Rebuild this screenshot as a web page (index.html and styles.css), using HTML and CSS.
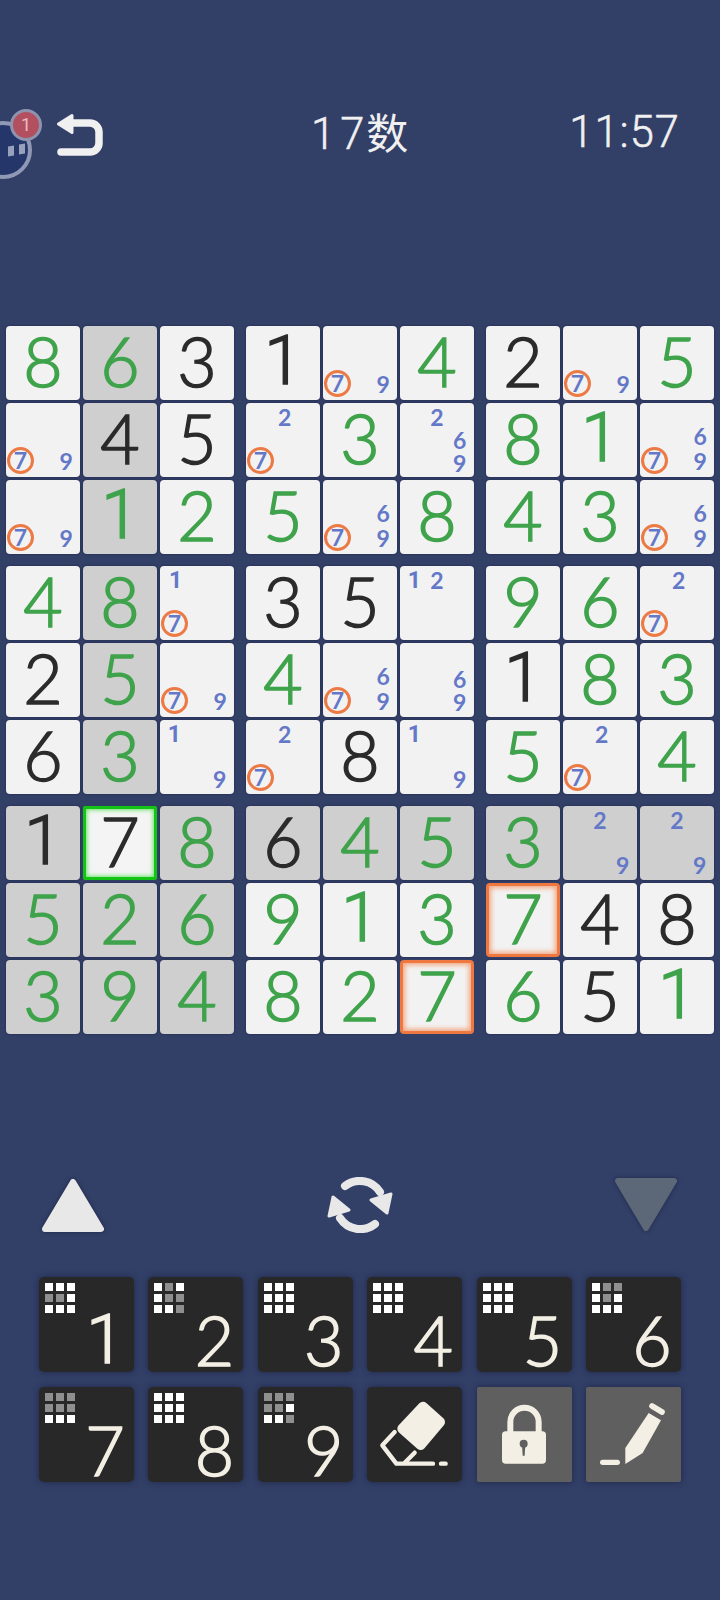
FILE: index.html
```html
<!DOCTYPE html>
<html lang="en">

<head>
    <meta charset="UTF-8">
    <meta name="viewport" content="width=device-width, initial-scale=1.0">
    <title>17数</title>
    <link rel="stylesheet" href="styles.css">
</head>

<body>
    <div class="mascot">
        <span class="eye eye-left"></span>
        <span class="eye eye-right"></span>
        <span class="badge">1</span>
    </div>

    <header class="topbar">
        <svg class="back" viewBox="0 0 46 46">
            <path class="back-line" d="M14 11H33a9 9 0 0 1 9 9v11a9 9 0 0 1-9 9H4" />
            <path class="back-head" d="M1.500 12 L15 3.500 V20.500 Z" />
        </svg>
        <div class="title">17<span class="title-han">数</span></div>
        <div class="clock">11:57</div>
    </header>

    <!-- Board: 9 boxes, each with 9 cells -->
    <main class="board">
        <div class="box">
            <div class="cell given">8</div>
            <div class="cell shade given">6</div>
            <div class="cell">3</div>
            <div class="cell notes"><i class="n7">7</i><i class="n9">9</i></div>
            <div class="cell shade">4</div>
            <div class="cell">5</div>
            <div class="cell notes"><i class="n7">7</i><i class="n9">9</i></div>
            <div class="cell shade given one">1</div>
            <div class="cell given">2</div>
        </div>
        <div class="box">
            <div class="cell one">1</div>
            <div class="cell notes"><i class="n7">7</i><i class="n9">9</i></div>
            <div class="cell given">4</div>
            <div class="cell notes"><i class="n2">2</i><i class="n7">7</i></div>
            <div class="cell given">3</div>
            <div class="cell notes"><i class="n2">2</i><i class="n6">6</i><i class="n9">9</i></div>
            <div class="cell given">5</div>
            <div class="cell notes"><i class="n6">6</i><i class="n7">7</i><i class="n9">9</i></div>
            <div class="cell given">8</div>
        </div>
        <div class="box">
            <div class="cell">2</div>
            <div class="cell notes"><i class="n7">7</i><i class="n9">9</i></div>
            <div class="cell given">5</div>
            <div class="cell given">8</div>
            <div class="cell given one">1</div>
            <div class="cell notes"><i class="n6">6</i><i class="n7">7</i><i class="n9">9</i></div>
            <div class="cell given">4</div>
            <div class="cell given">3</div>
            <div class="cell notes"><i class="n6">6</i><i class="n7">7</i><i class="n9">9</i></div>
        </div>

        <div class="box">
            <div class="cell given">4</div>
            <div class="cell shade given">8</div>
            <div class="cell notes"><i class="n1">1</i><i class="n7">7</i></div>
            <div class="cell">2</div>
            <div class="cell shade given">5</div>
            <div class="cell notes"><i class="n7">7</i><i class="n9">9</i></div>
            <div class="cell">6</div>
            <div class="cell shade given">3</div>
            <div class="cell notes"><i class="n1">1</i><i class="n9">9</i></div>
        </div>
        <div class="box">
            <div class="cell">3</div>
            <div class="cell">5</div>
            <div class="cell notes"><i class="n1">1</i><i class="n2">2</i></div>
            <div class="cell given">4</div>
            <div class="cell notes"><i class="n6">6</i><i class="n7">7</i><i class="n9">9</i></div>
            <div class="cell notes"><i class="n6">6</i><i class="n9">9</i></div>
            <div class="cell notes"><i class="n2">2</i><i class="n7">7</i></div>
            <div class="cell">8</div>
            <div class="cell notes"><i class="n1">1</i><i class="n9">9</i></div>
        </div>
        <div class="box">
            <div class="cell given">9</div>
            <div class="cell given">6</div>
            <div class="cell notes"><i class="n2">2</i><i class="n7">7</i></div>
            <div class="cell one">1</div>
            <div class="cell given">8</div>
            <div class="cell given">3</div>
            <div class="cell given">5</div>
            <div class="cell notes"><i class="n2">2</i><i class="n7">7</i></div>
            <div class="cell given">4</div>
        </div>

        <div class="box">
            <div class="cell shade one">1</div>
            <div class="cell selected">7</div>
            <div class="cell shade given">8</div>
            <div class="cell shade given">5</div>
            <div class="cell shade given">2</div>
            <div class="cell shade given">6</div>
            <div class="cell shade given">3</div>
            <div class="cell shade given">9</div>
            <div class="cell shade given">4</div>
        </div>
        <div class="box">
            <div class="cell shade">6</div>
            <div class="cell shade given">4</div>
            <div class="cell shade given">5</div>
            <div class="cell given">9</div>
            <div class="cell given one">1</div>
            <div class="cell given">3</div>
            <div class="cell given">8</div>
            <div class="cell given">2</div>
            <div class="cell given conflict">7</div>
        </div>
        <div class="box">
            <div class="cell shade given">3</div>
            <div class="cell shade notes"><i class="n2">2</i><i class="n9">9</i></div>
            <div class="cell shade notes"><i class="n2">2</i><i class="n9">9</i></div>
            <div class="cell given conflict">7</div>
            <div class="cell">4</div>
            <div class="cell">8</div>
            <div class="cell given">6</div>
            <div class="cell">5</div>
            <div class="cell given one">1</div>
        </div>
    </main>

    <div class="tools">
        <svg class="arrow" viewBox="0 0 62 54">
            <path class="arrow-up" d="M31 4 L59 51 H3 Z" />
        </svg>
        <svg class="refresh" viewBox="0 0 66 56">
            <path class="refresh-line" d="M18 9A24 24 0 0 1 53 15" />
            <path class="refresh-head" d="M64 17 L44 23 L60 36 Z" />
            <path class="refresh-line" d="M48 47A24 24 0 0 1 13 41" />
            <path class="refresh-head" d="M2 39 L22 33 L6 20 Z" />
        </svg>
        <svg class="arrow" viewBox="0 0 62 54">
            <path class="arrow-down" d="M31 50 L59 3 H3 Z" />
        </svg>
    </div>

    <!-- Number keys -->
    <section class="keypad">
        <button class="key">
            <span class="mini"><i></i><i></i><i></i><i class="used"></i><i class="used"></i><i></i><i></i><i></i><i></i></span>
            <span class="digit one">1</span>
        </button>
        <button class="key">
            <span class="mini"><i></i><i class="used"></i><i></i><i></i><i class="used"></i><i class="used"></i><i></i><i></i><i class="used"></i></span>
            <span class="digit">2</span>
        </button>
        <button class="key">
            <span class="mini"><i></i><i></i><i></i><i></i><i></i><i></i><i></i><i></i><i></i></span>
            <span class="digit">3</span>
        </button>
        <button class="key">
            <span class="mini"><i></i><i></i><i></i><i></i><i></i><i></i><i></i><i></i><i></i></span>
            <span class="digit">4</span>
        </button>
        <button class="key">
            <span class="mini"><i></i><i></i><i></i><i></i><i></i><i></i><i></i><i></i><i></i></span>
            <span class="digit">5</span>
        </button>
        <button class="key">
            <span class="mini"><i></i><i class="used"></i><i class="used"></i><i></i><i class="used"></i><i></i><i></i><i></i><i></i></span>
            <span class="digit">6</span>
        </button>
        <button class="key">
            <span class="mini"><i class="used"></i><i class="used"></i><i class="used"></i><i class="used"></i><i class="used"></i><i class="used"></i><i></i><i></i><i></i></span>
            <span class="digit">7</span>
        </button>
        <button class="key">
            <span class="mini"><i></i><i></i><i></i><i></i><i></i><i></i><i></i><i></i><i></i></span>
            <span class="digit">8</span>
        </button>
        <button class="key">
            <span class="mini"><i class="used"></i><i class="used"></i><i class="used"></i><i class="used"></i><i class="used"></i><i></i><i></i><i></i><i class="used"></i></span>
            <span class="digit">9</span>
        </button>
        <button class="key">
            <svg class="key-icon" viewBox="0 0 285 285">
                <path class="eraser-body" d="M168 59 L219 105 L161 174 L106 125 Z" />
                <path class="ink-line" d="M83 135 L46 175 L88 230 H198 M143 197 L113 227" />
                <path class="ink-line" d="M222 230 H236" />
            </svg>
        </button>
        <button class="key key-mode">
            <svg class="key-icon" viewBox="0 0 285 285">
                <path class="shackle" d="M100 135V105a42.500 42.500 0 0 1 85 0V135" />
                <rect class="ink-plain" x="75" y="133" width="132" height="97" rx="11" />
                <circle class="keyhole" cx="140" cy="170" r="12" />
                <path class="keyhole" d="M135 172 H145 L143 206 H137 Z" />
            </svg>
        </button>
        <button class="key key-mode">
            <svg class="key-icon" viewBox="0 0 285 285">
                <path class="pencil-cap" d="M198 57 L228 75" />
                <path class="ink-plain" d="M188 78 L225 100 L170 198 L118 231 V183 Z" />
                <path class="pencil-dash" d="M50 226 H94" />
            </svg>
        </button>
    </section>
</body>

</html>
```

FILE: styles.css
```css
/* General styling */
body {
    font-family: "Lato", "Noto Sans CJK SC", sans-serif;
    margin: 0;
    padding: 0;
    width: 720px;
    height: 1600px;
    overflow: hidden;
    position: relative;
    background-color: #323f67;
}

/* Lato's 1 has a foot, the reference's doesn't */
.one {
    font-family: "Roboto", sans-serif;
}

/* Top bar */
.mascot {
    position: absolute;
    left: -26px;
    top: 121px;
    width: 50px;
    height: 50px;
    border: 4px solid #8f98b5;
    border-radius: 50%;
    background-color: #24366a;
}

.eye {
    position: absolute;
    width: 6px;
    height: 10px;
    background-color: #98a1bb;
    transform: skewY(-8deg);
}

.eye-left {
    left: 30px;
    top: 21px;
}

.eye-right {
    left: 41px;
    top: 19px;
}

.badge {
    position: absolute;
    left: 32px;
    top: -16px;
    width: 26px;
    height: 26px;
    border: 3px solid #8f94ae;
    border-radius: 50%;
    background-color: #b3505f;
    color: #e9bcc2;
    font-family: "Roboto", sans-serif;
    font-size: 18px;
    line-height: 26px;
    text-align: center;
}

.topbar {
    display: flex;
    align-items: center;
    height: 46px;
    margin-top: 112px;
    padding: 0 40px 0 57px;
    position: relative;
    color: #f0f0f0;
    font-family: "Roboto", "Noto Sans CJK SC", sans-serif;
}

.back {
    width: 46px;
    height: 46px;
}

.back-line {
    fill: none;
    stroke: #f0f0f0;
    stroke-width: 7.5;
    stroke-linecap: round;
}

.back-head {
    fill: #f0f0f0;
    stroke: #f0f0f0;
    stroke-width: 3;
    stroke-linejoin: round;
}

.title {
    margin: 0 0 4px 208px;
    font-size: 43.5px;
    font-weight: 300;
    -webkit-text-stroke: 0.5px;
    letter-spacing: 5px;
    line-height: 46px;
    white-space: nowrap;
}

.title-han {
    font-family: "Noto Sans CJK SC", sans-serif;
    font-size: 42px;
    font-weight: 400;
    -webkit-text-stroke: 0;
    letter-spacing: 0;
    margin-left: -3px;
}

.clock {
    margin: 0 0 4px auto;
    font-size: 43.5px;
    font-weight: 300;
    -webkit-text-stroke: 0.5px;
    letter-spacing: 1px;
    line-height: 46px;
    white-space: nowrap;
}

/* Board */
.board {
    display: grid;
    grid-template-columns: repeat(3, 228px);
    gap: 12px;
    margin-top: 168px;
    padding-left: 6px;
}

.box {
    display: grid;
    grid-template-columns: repeat(3, 74px);
    grid-auto-rows: 74px;
    gap: 3px;
}

.cell {
    display: flex;
    align-items: center;
    justify-content: center;
    box-sizing: border-box;
    padding-bottom: 4px;
    border-radius: 4px;
    background-color: #f2f2f2;
    box-shadow: 0 0 2px #1b2342;
    color: #2b2b2b;
    font-size: 68px;
    font-weight: 300;
    -webkit-text-stroke: 1.5px;
    line-height: 1;
}

.given {
    color: #3fa34b;
}

.shade {
    background-color: #cfcfcf;
}

.selected {
    border: 3px solid #14c414;
    border-radius: 2px;
    background-color: #f4f4f4;
    box-shadow: inset 0 0 4px 1px #63e663;
}

.conflict {
    border: 3px solid #ee7840;
    box-shadow: inset 0 0 5px 2px #f3a67f;
}

/* Pencil marks */
.notes {
    display: grid;
    grid-template-columns: repeat(3, 1fr);
    grid-template-rows: repeat(3, 1fr);
    padding: 3px;
    color: #6478c8;
    font-size: 23px;
    font-weight: 700;
    -webkit-text-stroke: 0;
}

.notes i {
    display: flex;
    align-items: center;
    justify-content: center;
    font-style: normal;
}

.n1 { grid-area: 1 / 1; font-family: "Roboto", sans-serif; }
.n2 { grid-area: 1 / 2; }
.n6 { grid-area: 2 / 3; }
.n9 { grid-area: 3 / 3; }

.notes .n7 {
    grid-area: 3 / 1;
    box-sizing: border-box;
    width: 27px;
    height: 27px;
    margin: -1px 0 0 -2px;
    border: 3px solid #ec7a45;
    border-radius: 50%;
}

/* Arrows and refresh */
.tools {
    display: flex;
    align-items: center;
    justify-content: space-between;
    margin: 143px 43px 0 42px;
}

.arrow {
    width: 62px;
    height: 54px;
    filter: drop-shadow(0 0 2px #1f2848);
}

.arrow-up {
    fill: #e8e8e8;
    stroke: #e8e8e8;
    stroke-width: 6;
    stroke-linejoin: round;
}

.arrow-down {
    fill: #5c6877;
    stroke: #5c6877;
    stroke-width: 6;
    stroke-linejoin: round;
}

.refresh {
    width: 66px;
    height: 56px;
}

.refresh-line {
    fill: none;
    stroke: #e8e8e8;
    stroke-width: 8;
    stroke-linecap: round;
}

.refresh-head {
    fill: #e8e8e8;
    stroke: #e8e8e8;
    stroke-width: 3;
    stroke-linejoin: round;
}

/* Keypad */
.keypad {
    display: grid;
    grid-template-columns: repeat(6, 95px);
    grid-auto-rows: 95px;
    column-gap: 14.4px;
    row-gap: 15px;
    margin-top: 44px;
    padding-left: 39px;
}

.key {
    display: flex;
    flex-direction: column;
    justify-content: space-between;
    padding: 6px;
    border: none;
    border-radius: 5px;
    background-color: #282828;
    box-shadow: 0 0 6px #1f2848;
    color: #f3efe4;
    font-family: inherit;
}

.key-mode {
    border-radius: 2px;
    background-color: #5f5f5f;
}

.mini {
    display: grid;
    grid-template-columns: repeat(3, 8px);
    grid-auto-rows: 8px;
    gap: 3px;
}

.mini i {
    background-color: #ffffff;
}

.mini .used {
    background-color: #8f8f8f;
}

.digit {
    align-self: flex-end;
    width: 46px;
    font-size: 68px;
    font-weight: 300;
    -webkit-text-stroke: 1.5px;
    line-height: 54px;
    text-align: center;
}

.key-icon {
    width: 95px;
    height: 95px;
    margin: -6px;
}

.eraser-body {
    fill: #f3efe4;
    stroke: #f3efe4;
    stroke-width: 30;
    stroke-linejoin: round;
}

.ink-line {
    fill: none;
    stroke: #f3efe4;
    stroke-width: 13;
    stroke-linecap: round;
    stroke-linejoin: round;
}

.ink-plain {
    fill: #f3efe4;
}

.shackle {
    fill: none;
    stroke: #f3efe4;
    stroke-width: 18;
}

.keyhole {
    fill: #5f5f5f;
}

.pencil-cap {
    fill: none;
    stroke: #f3efe4;
    stroke-width: 17;
    stroke-linecap: round;
}

.pencil-dash {
    fill: none;
    stroke: #f3efe4;
    stroke-width: 16;
    stroke-linecap: round;
}
```
